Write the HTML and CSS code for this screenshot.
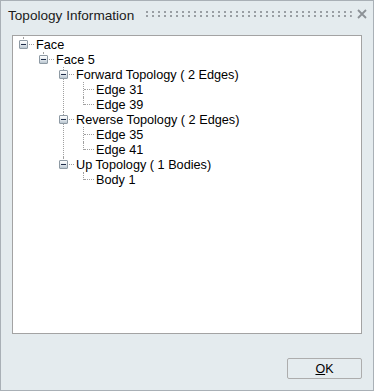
FILE: index.html
```html
<!DOCTYPE html>
<html lang="en">
<head>
  <meta charset="UTF-8">
  <title>Topology Information</title>
  <link rel="stylesheet" href="styles.css">
</head>
<body>
  <div class="window">
    <div class="titlebar">
      <span class="title">Topology Information</span>
      <svg class="grip" height="6">
        <defs>
          <pattern id="dots" width="6" height="4" patternUnits="userSpaceOnUse">
            <rect x="0" y="0" width="2" height="2" fill="#999ea3"/>
          </pattern>
        </defs>
        <rect x="0" y="0" width="100%" height="6" fill="url(#dots)"/>
      </svg>
      <svg class="close" width="10" height="10" viewBox="0 0 10 10">
        <path d="M1 1 L9 9 M9 1 L1 9" stroke="#8c9196" stroke-width="1.8" fill="none"/>
      </svg>
    </div>

    <div class="tree">
      <ul class="level">
        <li>
          <div class="row"><span class="box"></span><span class="label">Face</span></div>
          <ul class="level">
            <li>
              <div class="row"><span class="box"></span><span class="label">Face 5</span></div>
              <ul class="level">
                <li>
                  <div class="row"><span class="box"></span><span class="label">Forward Topology ( 2 Edges)</span></div>
                  <ul class="level">
                    <li class="leaf"><div class="row"><span class="label">Edge 31</span></div></li>
                    <li class="leaf"><div class="row"><span class="label">Edge 39</span></div></li>
                  </ul>
                </li>
                <li>
                  <div class="row"><span class="box"></span><span class="label">Reverse Topology ( 2 Edges)</span></div>
                  <ul class="level">
                    <li class="leaf"><div class="row"><span class="label">Edge 35</span></div></li>
                    <li class="leaf"><div class="row"><span class="label">Edge 41</span></div></li>
                  </ul>
                </li>
                <li>
                  <div class="row"><span class="box"></span><span class="label">Up Topology ( 1 Bodies)</span></div>
                  <ul class="level">
                    <li class="leaf"><div class="row"><span class="label">Body 1</span></div></li>
                  </ul>
                </li>
              </ul>
            </li>
          </ul>
        </li>
      </ul>
    </div>

    <div class="footer">
      <button type="button" class="ok-button"><u>O</u>K</button>
    </div>
  </div>
</body>
</html>
```

FILE: styles.css
```css
body {
  margin: 0;
  padding: 0;
  background-color: #e4ebee;
  font-family: "Liberation Sans", Arial, sans-serif;
}

.window {
  width: 374px;
  height: 391px;
  box-sizing: border-box;
  border: 1px solid #a9b0b6;
  background-color: #e4ebee;
  display: flex;
  flex-direction: column;
}

/* title bar with grip dots and close cross */
.titlebar {
  height: 34px;
  box-sizing: border-box;
  display: flex;
  align-items: flex-start;
  padding: 6px 6px 0 7px;
}

.title {
  font-size: 13.6px;
  line-height: 18px;
  color: #1b1b1b;
}

.grip {
  flex: 1;
  min-width: 0;
  margin: 4px 5px 0 12px;
}

.close {
  margin-top: 2px;
}

/* tree view */
.tree {
  margin: 0 11px;
  height: 299px;
  box-sizing: border-box;
  border: 1px solid #a3a3a3;
  background-color: #ffffff;
  padding-top: 1px;
  font-size: 12.7px;
  color: #000000;
}

.level {
  list-style: none;
  margin: 0;
  padding: 0;
}

.level .level {
  margin-left: 20px;
}

.level li {
  position: relative;
}

/* vertical connector */
.level li::before {
  content: "";
  position: absolute;
  left: 10px;
  top: 0;
  height: 100%;
  border-left: 1px dotted #a0a0a0;
}

.level li:last-child::before {
  height: 8px;
}

/* horizontal connector */
.level li::after {
  content: "";
  position: absolute;
  left: 11px;
  top: 7px;
  width: 10px;
  border-top: 1px dotted #a0a0a0;
}

.row {
  position: relative;
  z-index: 1;
  height: 15px;
  display: flex;
  align-items: center;
  padding-left: 6px;
}

.box {
  width: 9px;
  height: 9px;
  box-sizing: border-box;
  border: 1px solid #8e9aa4;
  border-radius: 1px;
  background: linear-gradient(#ffffff, #dde4ea 60%, #b9c5cf);
  display: flex;
  align-items: center;
  justify-content: center;
}

.box::before {
  content: "";
  width: 5px;
  height: 1px;
  background-color: #1e2c48;
}

.label {
  margin-left: 7px;
  padding: 0 1px;
  background-color: #ffffff;
}

.leaf .label {
  margin-left: 16px;
}

/* footer */
.footer {
  display: flex;
  justify-content: flex-end;
  padding: 24px 11px 0 0;
}

.ok-button {
  width: 75px;
  height: 21px;
  box-sizing: border-box;
  border: 1px solid #adadad;
  border-radius: 2px;
  background-color: #e5ecef;
  font-family: "Liberation Sans", Arial, sans-serif;
  font-size: 12.5px;
  color: #000000;
  padding: 0;
}
```
